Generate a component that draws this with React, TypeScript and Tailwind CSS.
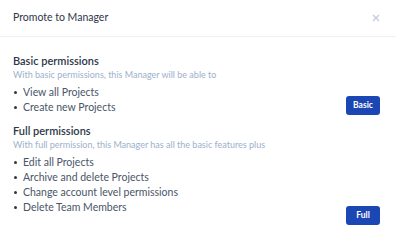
const basic = ['View all Projects', 'Create new Projects'];
const full = [
  'Edit all Projects',
  'Archive and delete Projects',
  'Change account level permissions',
  'Delete Team Members',
];

const Section = ({
  title,
  subtitle,
  items,
  action,
  buttonClass,
}: {
  title: string;
  subtitle: string;
  items: string[];
  action: string;
  buttonClass: string;
}) => (
  <div>
    <div className="text-[11px] leading-[14px] font-semibold text-[#2d3748]">{title}</div>
    <div className="text-[9px] leading-[12px] mt-[1px] text-[#9db0cc]">{subtitle}</div>
    <div className="flex items-start justify-between mt-[4px]">
      <ul className="flex flex-col">
        {items.map((item) => (
          <li key={item} className="flex items-center h-[15px] text-[10.5px] text-[#4a5568]">
            <span className="w-[3px] h-[3px] rounded-full bg-[#2d3748] mr-[6px] ml-[1px]" />
            {item}
          </li>
        ))}
      </ul>
      <button
        className={`bg-[#1b47b5] text-white text-[8.5px] font-bold rounded-[3px] w-[34px] h-[19px] mr-[3px] ${buttonClass}`}
      >
        {action}
      </button>
    </div>
  </div>
);

export default function App() {
  return (
    <div className="w-[396px] h-[246px] bg-white" style={{ fontFamily: 'Lato, "Open Sans", sans-serif' }}>
      <div className="h-[37px] flex items-center justify-between px-[13px] border-b border-[#eff1f4]">
        <span className="text-[10.5px] text-[#2d3748]">Promote to Manager</span>
        <svg width="8" height="8" viewBox="0 0 8 8" className="mr-[3px]">
          <path d="M1 1L7 7M7 1L1 7" stroke="#c3ccd9" strokeWidth="1.3" />
        </svg>
      </div>
      <div className="px-[13px] pt-[17px] flex flex-col gap-[9px]">
        <Section
          title="Basic permissions"
          subtitle="With basic permissions, this Manager will be able to"
          items={basic}
          action="Basic"
          buttonClass="mt-[11px]"
        />
        <Section
          title="Full permissions"
          subtitle="With full permission, this Manager has all the basic features plus"
          items={full}
          action="Full"
          buttonClass="mt-[51px] -mb-[10px]"
        />
      </div>
    </div>
  );
}
